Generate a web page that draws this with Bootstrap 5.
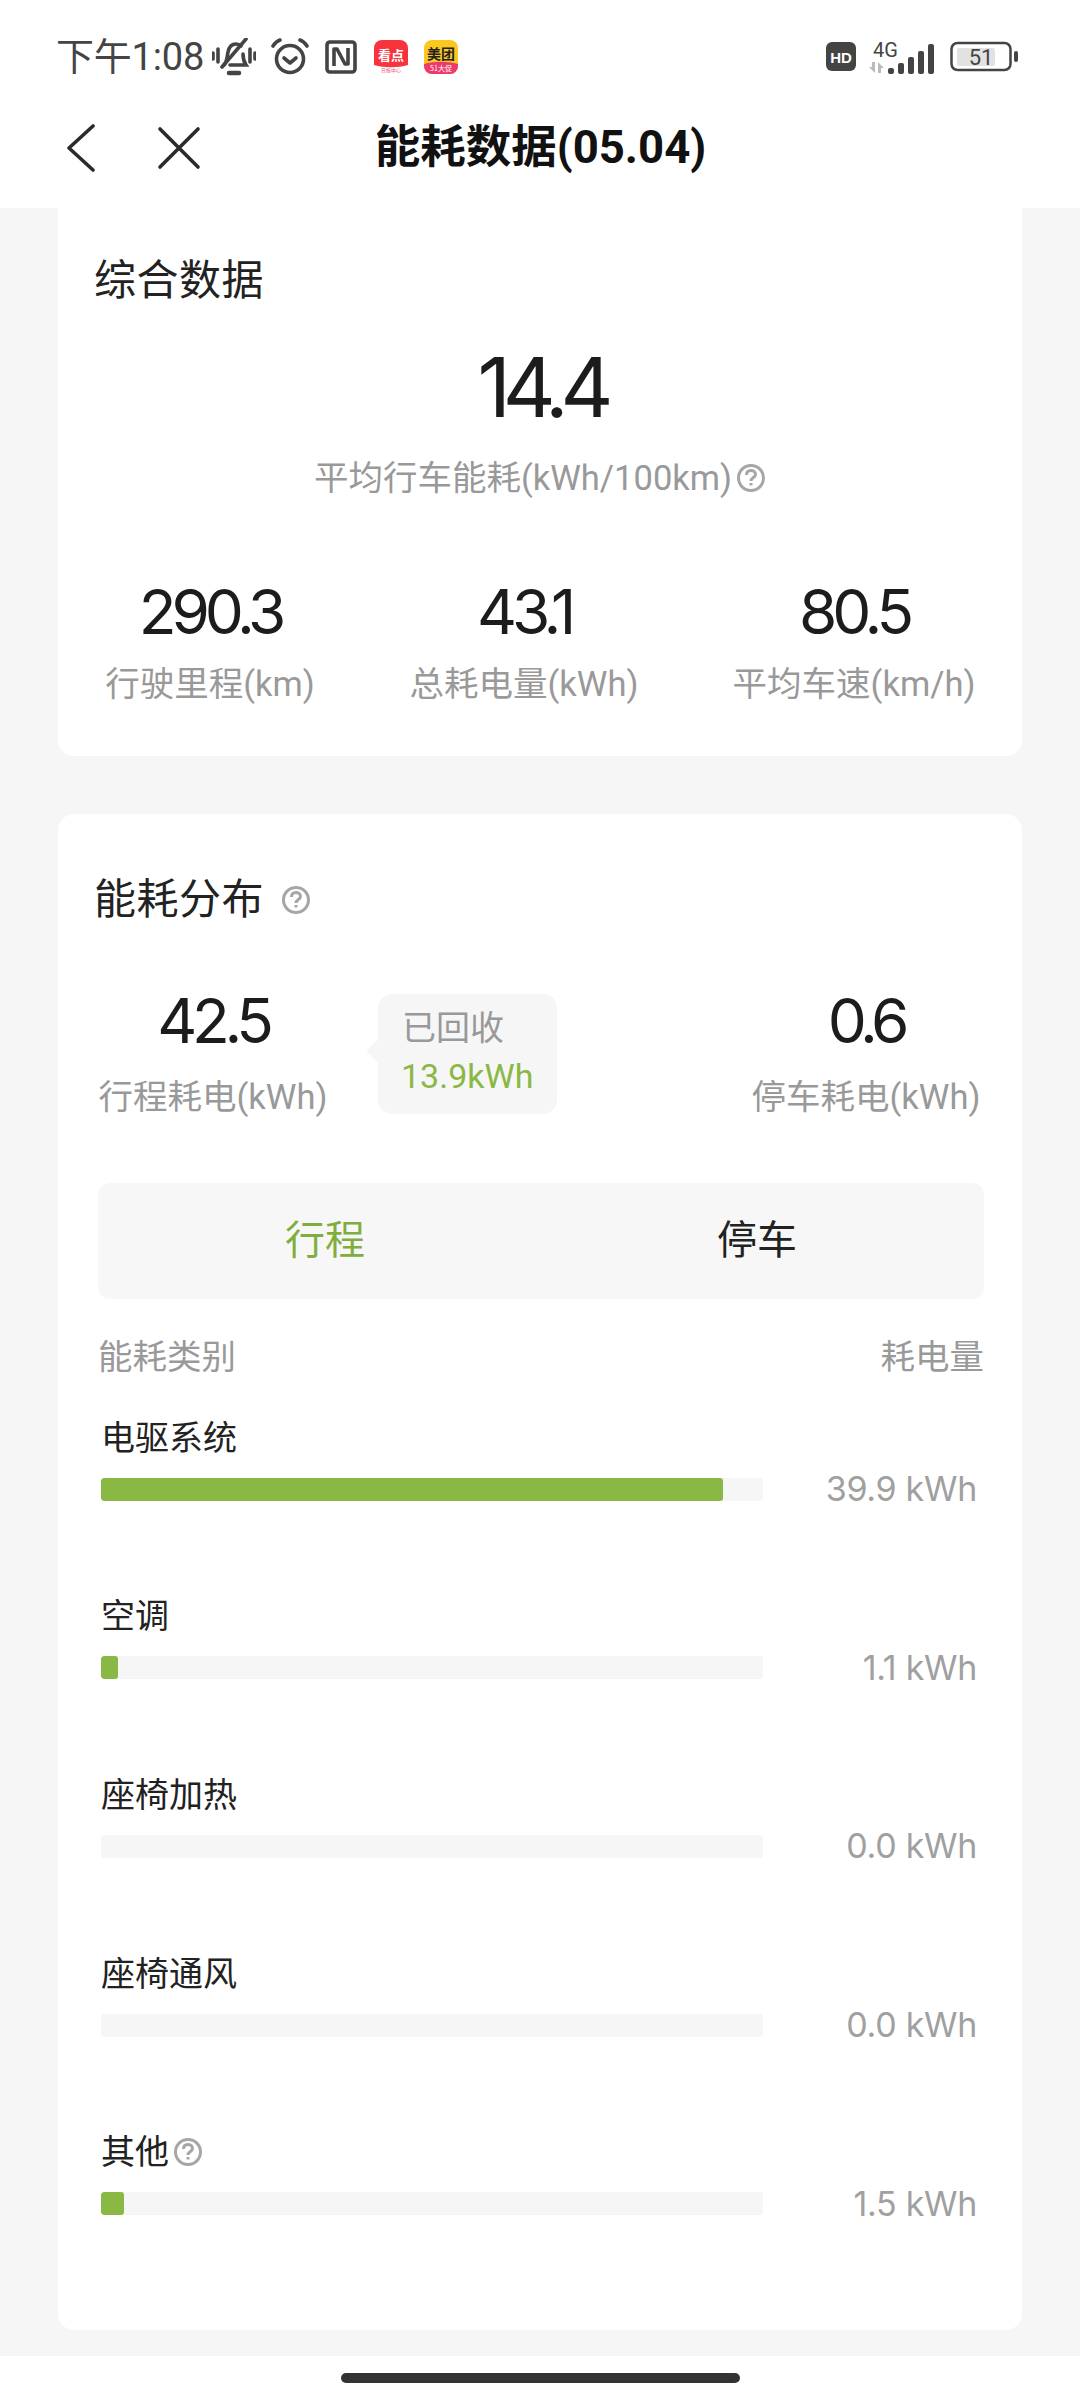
<!DOCTYPE html>
<html lang="zh-CN">
<head>
    <meta charset="UTF-8">
    <meta name="viewport" content="width=device-width, initial-scale=1.0">
    <link rel="stylesheet" href="https://cdn.jsdelivr.net/npm/bootstrap@5.3.2/dist/css/bootstrap.min.css">
    <style>
        html, body { height: 2400px; overflow: hidden; }
        body { background: #f6f6f6; font-family: "Roboto", "Noto Sans CJK SC", sans-serif; color: #1a1a1a; width: 1080px; }
        .top-area { background: #fff; height: 208px; }
        .status-line { height: 90px; padding: 24px 62px 0 56px; color: #444; }
        .status-time { font-size: 38px; line-height: 66px; width: 156px; white-space: nowrap; letter-spacing: -.2px; }
        .nav-line { height: 118px; position: relative; padding-left: 65px; }
        .page-title { font-size: 45.5px; font-weight: 700; color: #111; line-height: 118px; position: absolute; left: 0; right: 0; top: -1px; text-align: center; padding-left: 1px; }
        .page-body { height: 2148px; padding: 0 58px; }
        .info-card { border: 0; background: #fff; border-radius: 0 0 16px 16px; height: 548px; }
        .dist-card { border: 0; background: #fff; border-radius: 16px; height: 1516px; margin-top: 58px; }
        .block-title { font-size: 42px; line-height: 56px; letter-spacing: .5px; color: #222; }
        .big-num { font-family: "Inter", sans-serif; font-size: 82px; line-height: 96px; letter-spacing: -8px; color: #1c1c1c; padding-left: 3px; }
        .mid-num { font-family: "Inter", sans-serif; font-size: 62px; line-height: 72px; letter-spacing: -5.2px; color: #1c1c1c; }
        .muted-label { font-size: 34.5px; line-height: 44px; color: #999; white-space: nowrap; }
        .help-icon { color: #a6a6a6; flex-shrink: 0; }
        .stat-row { margin-top: 76px; }
        .stat-cell { text-align: center; }
        .recover-tip { position: absolute; left: 320px; top: 180px; width: 179px; height: 120px; background: #f6f6f6; border-radius: 14px; padding: 11px 0 0 24px; }
        .recover-tip::before { content: ""; position: absolute; left: -8px; top: 48px; width: 18px; height: 18px; background: #f6f6f6; transform: rotate(45deg); }
        .recover-label { font-size: 34px; line-height: 46px; color: #999; position: relative; }
        .recover-value { font-size: 34px; line-height: 50px; color: #8ab845; position: relative; white-space: nowrap; margin-left: -1px; }
        .seg-box { margin: 0 38px 0 40px; height: 116px; background: #f7f7f7; border-radius: 12px; }
        .seg-item { font-size: 40px; line-height: 116px; text-align: center; flex: 1; color: #222; }
        .seg-on { color: #7fae3f; }
        .seg-item:first-child { flex: 0 0 454px; }
        .seg-item:last-child { padding-right: 22px; }
        .list-head { margin: 36px 38px 0 40px; font-size: 34.5px; line-height: 44px; color: #999; }
        .energy-row { height: 178.7px; padding: 0 45px 0 43px; }
        .energy-name { font-size: 34px; line-height: 44px; color: #222; height: 59px; }
        .energy-track { width: 662px; height: 23px; background: #f6f6f6; border-radius: 3px; }
        .energy-track .progress-bar { background: #8ab845; border-radius: 3px; }
        .energy-val { font-family: "Inter", sans-serif; font-size: 34px; line-height: 44px; color: #a0a0a0; letter-spacing: -.3px; }
        .home-area { position: absolute; left: 0; top: 2356px; width: 1080px; height: 44px; background: #fff; }
        .home-bar { width: 399px; height: 10px; margin: 17px auto 0; background: #333; border-radius: 5px; }
        .app-badge { display: block; }
    </style>
</head>
<body>

    <div class="top-area">
        <div class="status-line d-flex align-items-center">
            <div class="status-time">下午1:08</div>
            <div class="d-flex align-items-center">
                <svg width="44" height="38" viewBox="0 0 44 38" fill="none" stroke="#444" stroke-width="3.6" stroke-linecap="round">
                    <path d="M1 15v6M6 11v13M38 11v13M43 15v6"/>
                    <path d="M12 27c3-3 3-8 4-13 1-5 4-8 8-8 2 0 4 1 5 2M31 16c0 4 1 8 3 11H18"/>
                    <path d="M10 29 34 1"/>
                    <path d="M17 35h10" stroke-width="4.500"/>
                </svg>
                <svg width="38" height="38" viewBox="0 0 38 38" fill="none" stroke="#444" stroke-width="3.6" stroke-linecap="round" stroke-linejoin="round" style="margin-left:15px">
                    <circle cx="19" cy="21" r="13.500"/>
                    <path d="M13 20l6 5 6-5"/>
                    <path d="M2 8c2-3 4-5 7-6M36 8c-2-3-4-5-7-6"/>
                </svg>
                <svg width="32" height="34" viewBox="0 0 32 34" fill="none" stroke="#444" stroke-width="3.6" stroke-linejoin="round" style="margin-left:16px">
                    <rect x="2" y="2" width="28" height="30" rx="3"/>
                    <path d="M9 26V9h3l8 15h3V8"/>
                </svg>
                <svg class="app-badge" width="34" height="34" viewBox="0 0 34 34" style="margin-left:17px">
                    <rect width="34" height="34" rx="8" fill="#fff"/>
                    <path d="M0 25V8a8 8 0 0 1 8-8h18a8 8 0 0 1 8 8v17c-10 3-24 3-34 0z" fill="#f7343c"/>
                    <text x="17" y="20" font-size="13" font-weight="700" fill="#fff" text-anchor="middle" font-family="Noto Sans CJK SC">看点</text>
                    <text x="17" y="32" font-size="5" fill="#e57" text-anchor="middle" font-family="Noto Sans CJK SC">日报中心</text>
                </svg>
                <svg class="app-badge" width="34" height="34" viewBox="0 0 34 34" style="margin-left:16px">
                    <rect width="34" height="34" rx="8" fill="#fcc820"/>
                    <path d="M0 24c10-3 24-3 34 0v2a8 8 0 0 1-8 8H8a8 8 0 0 1-8-8z" fill="#ee3a6a"/>
                    <text x="17" y="19" font-size="14" font-weight="700" fill="#222" text-anchor="middle" font-family="Noto Sans CJK SC">美团</text>
                    <text x="17" y="31" font-size="7" fill="#fff" text-anchor="middle" font-family="Noto Sans CJK SC">51大促</text>
                </svg>
            </div>
            <div class="d-flex align-items-center ms-auto">
                <svg width="30" height="30" viewBox="0 0 30 30">
                    <rect width="30" height="29" rx="6" fill="#444"/>
                    <text x="15" y="21" font-size="15" font-weight="700" fill="#fff" text-anchor="middle" font-family="Liberation Sans">HD</text>
                </svg>
                <svg width="68" height="38" viewBox="0 -4 68 38" style="margin-left:12px">
                    <text x="5" y="15" font-size="20" fill="#444" font-family="Roboto">4G</text>
                    <path d="M4 20h3v11l-6-6h3zM10 31V20l6 6h-3v5z" fill="#bbb"/>
                    <rect x="20" y="26" width="6" height="6" rx="2" fill="#444"/>
                    <rect x="30" y="21" width="6" height="11" rx="2" fill="#444"/>
                    <rect x="40" y="15" width="6" height="17" rx="2" fill="#444"/>
                    <rect x="50" y="9" width="6" height="23" rx="2" fill="#444"/>
                    <rect x="60" y="2" width="6" height="30" rx="2" fill="#444"/>
                </svg>
                <svg width="68" height="32" viewBox="0 0 68 32" style="margin-left:14px">
                    <rect x="1.500" y="2" width="59" height="27" rx="6" fill="#fff" stroke="#444" stroke-width="2.500"/>
                    <rect x="7" y="7" width="38" height="18" rx="2" fill="#e2e2e2"/>
                    <text x="31" y="24" font-size="22" fill="#444" text-anchor="middle" font-family="Roboto">51</text>
                    <rect x="64" y="10" width="4" height="11" rx="2" fill="#444"/>
                </svg>
            </div>
        </div>
        <div class="nav-line d-flex align-items-center">
            <svg width="32" height="48" viewBox="0 0 32 48" fill="none" stroke="#2b2b2b" stroke-width="3.6" stroke-linecap="round" stroke-linejoin="round" style="margin-top:-2px">
                <path d="M28 2 4 24l24 22"/>
            </svg>
            <svg width="44" height="44" viewBox="0 0 44 44" fill="none" stroke="#2b2b2b" stroke-width="3.6" stroke-linecap="round" style="margin-left:60px;margin-top:-2px">
                <path d="M3 3l38 38M41 3 3 41"/>
            </svg>
            <div class="page-title">能耗数据(05.04)</div>
        </div>
    </div>

    <div class="page-body">
        <div class="card info-card">
            <div class="block-title" style="padding:45px 0 0 36px">综合数据</div>
            <div class="text-center" style="margin-top:31px">
                <div class="big-num">14.4</div>
                <div class="muted-label d-flex justify-content-center align-items-center gap-1" style="margin-top:20px">
                    <span>平均行车能耗(kWh/100km)</span>
                    <svg class="help-icon" width="30" height="30" viewBox="0 0 30 30" fill="none" stroke="currentColor" stroke-width="3">
                        <circle cx="15" cy="15" r="12.500"/>
                        <path d="M10.500 12c0-3 2-4.500 4.500-4.500s4.500 1.500 4.500 4c0 3-4.500 3-4.500 6.500"/>
                        <path d="M15 20v2.500"/>
                    </svg>
                </div>
            </div>
            <div class="d-flex stat-row">
                <div class="stat-cell" style="width:304px">
                    <div class="mid-num">290.3</div>
                    <div class="muted-label" style="margin-top:14px">行驶里程(km)</div>
                </div>
                <div class="stat-cell" style="width:324px">
                    <div class="mid-num">43.1</div>
                    <div class="muted-label" style="margin-top:14px">总耗电量(kWh)</div>
                </div>
                <div class="stat-cell" style="width:336px">
                    <div class="mid-num">80.5</div>
                    <div class="muted-label" style="margin-top:14px">平均车速(km/h)</div>
                </div>
            </div>
        </div>

        <div class="card dist-card position-relative">
            <div class="d-flex align-items-center" style="padding:58px 0 0 36px">
                <div class="block-title">能耗分布</div>
                <svg class="help-icon" width="30" height="30" viewBox="0 0 30 30" fill="none" stroke="currentColor" stroke-width="3" style="margin-left:17px">
                    <circle cx="15" cy="15" r="12.500"/>
                    <path d="M10.500 12c0-3 2-4.500 4.500-4.500s4.500 1.500 4.500 4c0 3-4.500 3-4.500 6.500"/>
                    <path d="M15 20v2.500"/>
                </svg>
            </div>
            <div class="d-flex" style="margin-top:57px">
                <div class="stat-cell" style="width:310px">
                    <div class="mid-num">42.5</div>
                    <div class="muted-label" style="margin-top:18px">行程耗电(kWh)</div>
                </div>
                <div class="stat-cell" style="width:310px;margin-left:343px">
                    <div class="mid-num">0.6</div>
                    <div class="muted-label" style="margin-top:18px">停车耗电(kWh)</div>
                </div>
            </div>
            <div class="recover-tip">
                <div class="recover-label">已回收</div>
                <div class="recover-value">13.9kWh</div>
            </div>
            <div class="seg-box d-flex" style="margin-top:64px">
                <div class="seg-item seg-on">行程</div>
                <div class="seg-item">停车</div>
            </div>
            <div class="list-head d-flex justify-content-between">
                <span>能耗类别</span>
                <span>耗电量</span>
            </div>
            <div id="energyList" style="margin-top:29px"></div>
        </div>
    </div>

    <div class="home-area"><div class="home-bar"></div></div>

    <script>
        const energyList = document.getElementById('energyList');
        const helpSvg = `<svg class="help-icon ms-1" width="30" height="30" viewBox="0 0 30 30" fill="none" stroke="currentColor" stroke-width="3"><circle cx="15" cy="15" r="12.5"/><path d="M10.5 12c0-3 2-4.500 4.500-4.500s4.500 1.500 4.500 4c0 3-4.500 3-4.500 6.500"/><path d="M15 20v2.500"/></svg>`;

        const items = [
            { name: '电驱系统', kwh: '39.9', width: 622 },
            { name: '空调', kwh: '1.1', width: 17 },
            { name: '座椅加热', kwh: '0.0', width: 0 },
            { name: '座椅通风', kwh: '0.0', width: 0 },
            { name: '其他', kwh: '1.5', width: 23, help: true }
        ];

        items.forEach(({ name, kwh, width, help }) => {
            const row = document.createElement('div');
            row.className = 'energy-row';
            row.innerHTML = `
                <div class="energy-name d-flex align-items-center">${name}${help ? helpSvg : ''}</div>
                <div class="d-flex align-items-center justify-content-between">
                    <div class="progress energy-track"><div class="progress-bar" style="width:${width}px"></div></div>
                    <div class="energy-val">${kwh} kWh</div>
                </div>
            `;
            energyList.append(row);
        });
    </script>
    <script src="https://cdn.jsdelivr.net/npm/bootstrap@5.3.2/dist/js/bootstrap.bundle.min.js"></script>
</body>
</html>
